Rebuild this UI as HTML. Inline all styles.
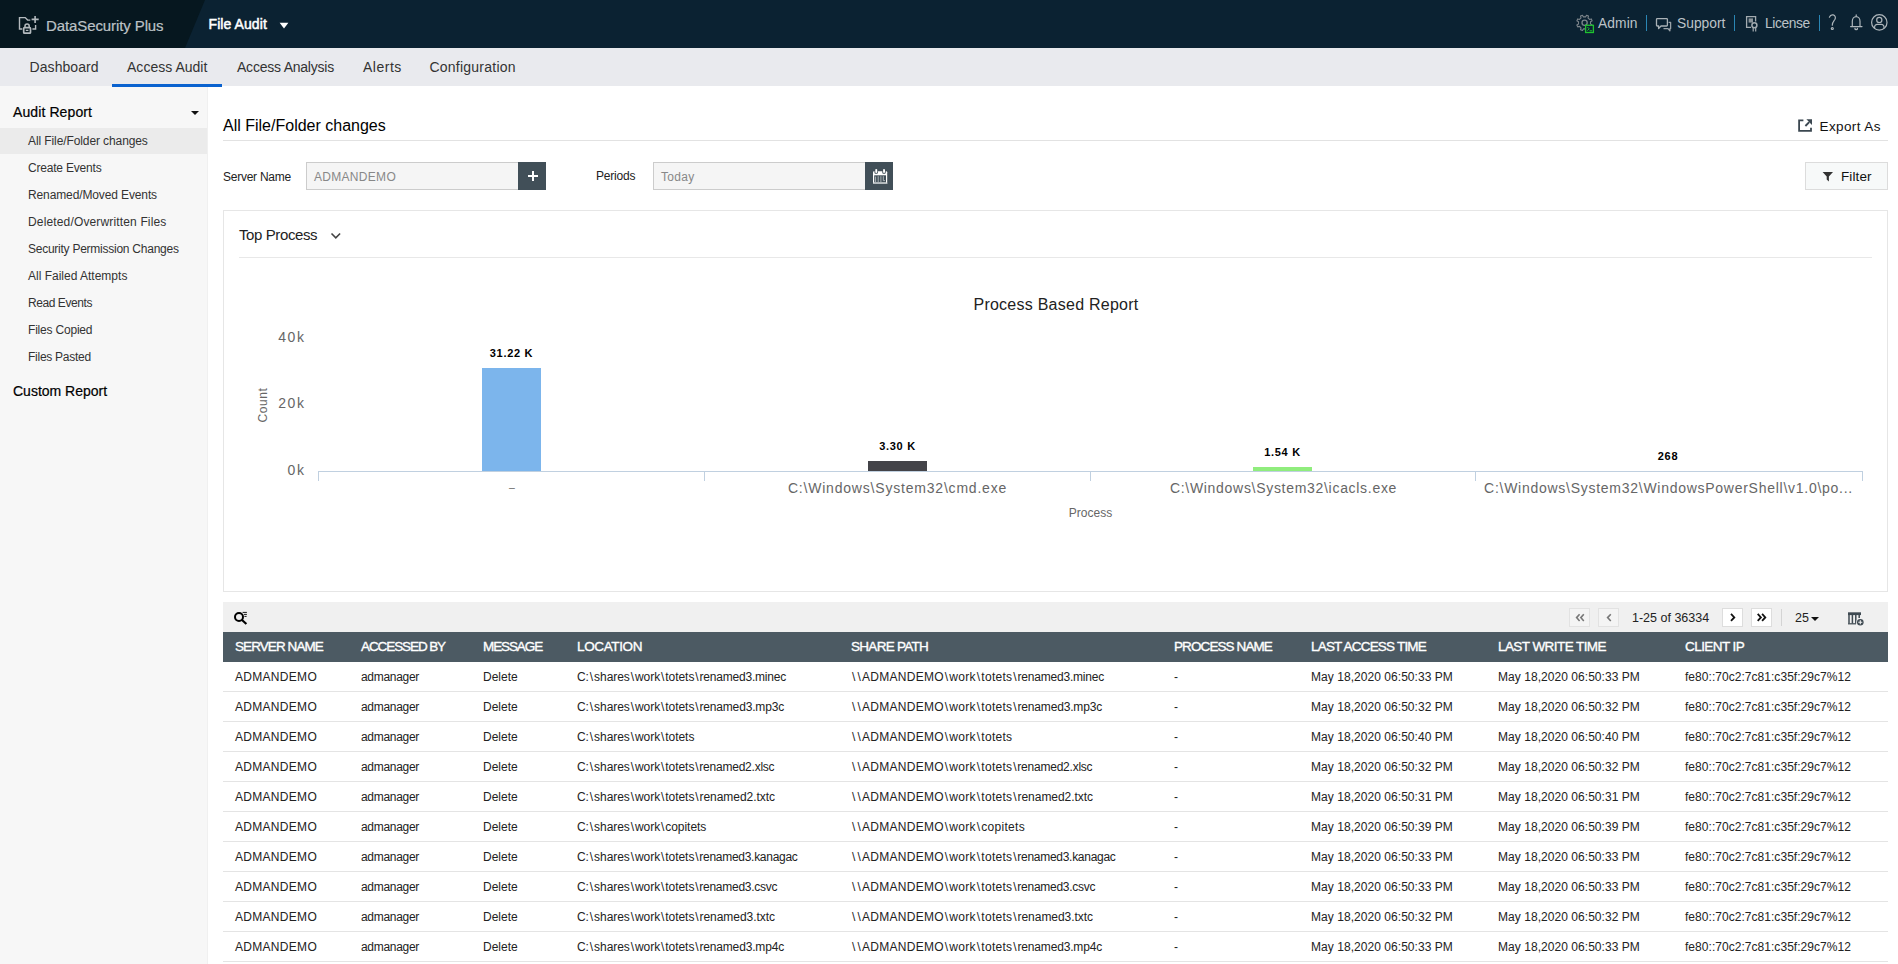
<!DOCTYPE html>
<html><head><meta charset="utf-8"><title>DataSecurity Plus</title>
<style>
*{box-sizing:border-box;margin:0;padding:0}
html,body{width:1898px;height:964px;overflow:hidden;background:#fff;font-family:"Liberation Sans",sans-serif;color:#222}
.abs{position:absolute}
.t{position:absolute;white-space:nowrap;line-height:1}
svg{position:absolute;overflow:visible}
#hdr{position:absolute;left:0;top:0;width:1898px;height:48px;background:#0b2232;overflow:hidden}
#hdr .dark{position:absolute;left:0;top:0;width:205px;height:48px;background:#06171f;clip-path:polygon(0 0,205px 0,185px 48px,0 48px)}
#hdr .lnk{font-size:13.8px;color:#bcc3c8;top:16.6px;letter-spacing:.08px}
#hdr .sep{position:absolute;top:15px;width:1px;height:16px;background:#2a86b4}
#nav{position:absolute;left:0;top:48px;width:1898px;height:40px}
#navbg{position:absolute;left:0;top:48px;width:1898px;height:38px;background:#e9eaee}
#nav .t{font-size:14px;color:#333;top:12px}
#side{position:absolute;left:0;top:86px;width:208px;height:878px;background:#f7f7f7;border-right:1px solid #f0f0f0}
#side .it{position:absolute;left:28px;font-size:12px;color:#333;white-space:nowrap;line-height:1}
#side .hd{position:absolute;left:13px;font-size:14px;color:#000;-webkit-text-stroke:.2px #000;white-space:nowrap;line-height:1}
.inp{position:absolute;top:162px;height:28px;background:#f5f5f5;border:1px solid #ccc;font-size:12px;color:#888;line-height:28px;padding-left:7px;letter-spacing:.3px}
.dbtn{position:absolute;top:162px;width:28px;height:28px;background:#414f58}
.lbl{font-size:12px;color:#222}
.ax{fill:#666;font-family:"Liberation Sans",sans-serif}
.dl{fill:#000;font-weight:bold;font-size:11px;letter-spacing:.7px;font-family:"Liberation Sans",sans-serif}
#tb{position:absolute;left:223px;top:602px;width:1665px;height:30px;background:#f0f0f0}
.pg{position:absolute;top:6px;width:21px;height:19px;border:1px solid #ddd;background:#fff}
.pg.dis{background:#f4f4f4;border-color:#e2e2e2}
#th{position:absolute;left:223px;top:632px;width:1665px;height:30px;background:#4c5a63}
#th .t{top:8px;font-size:13.5px;color:#fff;-webkit-text-stroke:.35px #fff}
.tr{position:absolute;left:223px;width:1665px;height:30px;border-bottom:1px solid #e4e4e4;font-size:12px;color:#222;line-height:31px}
.c{position:absolute;top:0;white-space:pre}
.c1{left:12px;letter-spacing:.3px}.c2{left:138px;letter-spacing:-.3px}.c3{left:260px}.c4{left:354px;letter-spacing:-.05px}.c5{left:628px;letter-spacing:.28px}
.c6{left:951px}.c7{left:1088px;letter-spacing:.05px}.c8{left:1275px;letter-spacing:.05px}.c9{left:1462px;letter-spacing:.04px}
.c i{font-style:normal;padding:0 .95px}
.c b{font-weight:normal}
</style></head><body>
<div id="hdr"><div class="dark"></div>
<svg width="1898" height="48" viewBox="0 0 1898 48" style="left:0;top:0">
<g fill="none" stroke="#b4babe" stroke-width="1.4">
<path d="M22.3,29 H19.5 V17.6 H25.2 L27.6,20.1 H30.3"/>
<path d="M35.6,25 V29 H32.4"/>
<path d="M31.6,19.4 H38.7 M35.1,15.9 V22.9" stroke-width="1.6"/>
<rect x="23.7" y="27.6" width="6.8" height="5.6" rx="0.8" stroke-width="1.7"/>
<path d="M25,27.4 V26 a2.1,2.1 0 0 1 4.2,0 V27.4" stroke-width="1.5"/>
<path d="M25.8,30.4 H28.4" stroke-width="1.2"/>
</g>
<g fill="none" stroke="#7d858b" stroke-width="1.1" stroke-linejoin="round">
<path d="M1590.50,24.00 L1592.14,24.92 L1591.33,26.87 L1589.52,26.37 L1587.97,27.92 L1588.47,29.73 L1586.52,30.54 L1585.60,28.90 L1583.40,28.90 L1582.48,30.54 L1580.53,29.73 L1581.03,27.92 L1579.48,26.37 L1577.67,26.87 L1576.86,24.92 L1578.50,24.00 L1578.50,21.80 L1576.86,20.88 L1577.67,18.93 L1579.48,19.43 L1581.03,17.88 L1580.53,16.07 L1582.48,15.26 L1583.40,16.90 L1585.60,16.90 L1586.52,15.26 L1588.47,16.07 L1587.97,17.88 L1589.52,19.43 L1591.33,18.93 L1592.14,20.88 L1590.50,21.80Z"/>
<circle cx="1584.6" cy="22.8" r="2.6" stroke-width="1.3"/>
</g>
<rect x="1585.6" y="25.3" width="7.8" height="7.2" fill="#0b2232" stroke="#1fc22f" stroke-width="1.3"/>
<path d="M1587.4,27 L1589.2,28.8 L1587.4,30.6 M1589.6,30.8 H1592.2" fill="none" stroke="#1fc22f" stroke-width="1"/>
<g fill="none" stroke="#9aa3a9" stroke-width="1.3" stroke-linejoin="round">
<path d="M1663.5,28.6 H1668 L1669.9,30.8 V28.6 H1670.6 V22.3 H1668.6"/>
<path d="M1657.3,18.7 H1666.6 a0.8,0.8 0 0 1 .8,.8 V25.2 a.8,.8 0 0 1 -.8,.8 H1661 L1658.6,28.6 V26 H1657.3 a.8,.8 0 0 1 -.8,-.8 V19.5 a.8,.8 0 0 1 .8,-.8Z" stroke="#aab2b7"/>
</g>
<g fill="none" stroke="#a3abb0" stroke-width="1.3">
<path d="M1751,27.4 H1746.6 V16.6 H1755.6 V21.6"/>
<rect x="1748.6" y="18.4" width="4.4" height="4.2" fill="#8a9399" stroke="none"/>
<circle cx="1754.4" cy="25.3" r="2.5" fill="#0b2232" stroke-width="1.5"/>
<path d="M1753.2,28 V31.6 M1755.7,28 V31.6" stroke-width="1.2"/>
</g>
<g fill="none" stroke="#aeb6bb" stroke-width="1.2" stroke-linecap="round">
<path d="M1829.4,17.2 C1830.2,15.2 1832,14.6 1833.2,14.9 C1835.2,15.4 1835.9,17.6 1835,19.3 C1834,21 1832.3,21.8 1832.3,25.2"/>
<circle cx="1832.3" cy="28.5" r="1"/>
<path d="M1850.6,26.6 H1862 M1852.3,26.6 V21.2 a3.85,4.6 0 0 1 7.7,0 V26.6 M1856.2,16.4 V14.9"/>
<path d="M1855,28.4 a1.2,1.2 0 0 0 2.4,0" stroke-width="1.4"/>
<circle cx="1879.3" cy="22.4" r="7.7"/>
<circle cx="1879.3" cy="19.9" r="2.6"/>
<path d="M1874.6,28 V27 a2.6,2.6 0 0 1 2.6,-2.6 H1881.4 a2.6,2.6 0 0 1 2.6,2.6 V28"/>
</g>
<path d="M279.6,22.8 h8.8 l-4.4,5.6z" fill="#fff"/>
</svg>
<div class="t" style="left:46px;top:18px;font-size:15px;color:#bcc2c6;-webkit-text-stroke:.2px #bcc2c6;letter-spacing:-.1px">DataSecurity Plus</div>
<div class="t" style="left:208.5px;top:17px;font-size:14px;color:#fff;-webkit-text-stroke:.5px #fff;letter-spacing:.08px">File Audit</div>
<div class="t lnk" style="left:1598px;letter-spacing:.1px">Admin</div><div class="sep" style="left:1646px"></div>
<div class="t lnk" style="left:1677px;letter-spacing:0">Support</div><div class="sep" style="left:1734px"></div>
<div class="t lnk" style="left:1765px;letter-spacing:-.4px">License</div><div class="sep" style="left:1819px"></div>
</div>
<div id="navbg"></div><div id="nav" style="z-index:3">
<div class="t" style="left:29.5px;letter-spacing:.08px">Dashboard</div>
<div class="t" style="left:127px;letter-spacing:.02px">Access Audit</div>
<div class="t" style="left:237px;letter-spacing:-.23px">Access Analysis</div>
<div class="t" style="left:363px;letter-spacing:.5px">Alerts</div>
<div class="t" style="left:429.5px;letter-spacing:.23px">Configuration</div>
<div class="abs" style="left:112px;top:36px;width:110px;height:3px;background:#0a62cf"></div>
</div>
<div id="side">
<div class="hd" style="top:19px;letter-spacing:.1px">Audit Report</div>
<div class="abs" style="left:191px;top:25px;width:0;height:0;border-left:4px solid transparent;border-right:4px solid transparent;border-top:4px solid #111"></div>
<div class="abs" style="left:0;top:42px;width:207px;height:26px;background:#ebebeb"></div>
<div class="it" style="top:49px;letter-spacing:-0.1px">All File/Folder changes</div>
<div class="it" style="top:76px;letter-spacing:-0.2px">Create Events</div>
<div class="it" style="top:103px;letter-spacing:-0.12px">Renamed/Moved Events</div>
<div class="it" style="top:130px;letter-spacing:0.15px">Deleted/Overwritten Files</div>
<div class="it" style="top:157px;letter-spacing:-0.25px">Security Permission Changes</div>
<div class="it" style="top:184px;letter-spacing:0px">All Failed Attempts</div>
<div class="it" style="top:211px;letter-spacing:-0.43px">Read Events</div>
<div class="it" style="top:238px;letter-spacing:-0.2px">Files Copied</div>
<div class="it" style="top:265px;letter-spacing:-0.26px">Files Pasted</div>
<div class="hd" style="top:298px">Custom Report</div>
</div>
<div class="t" style="left:223px;top:118px;font-size:16px;color:#000">All File/Folder changes</div>
<div class="abs" style="left:223px;top:140px;width:1665px;height:1px;background:#e2e2e2"></div>
<svg width="16" height="16" viewBox="0 0 16 16" style="left:1797px;top:118px"><g fill="none" stroke="#3b4750" stroke-width="1.8"><path d="M6.4,2.3 H2.1 V12.9 H14 V9.8"/><path d="M8.4,8 L12.2,4.2" stroke-width="1.9"/></g><path d="M9.4,1.3 H15 V6.9Z" fill="#3b4750"/></svg>
<div class="t" style="left:1819.5px;top:120px;font-size:13.5px;color:#111;letter-spacing:.4px">Export As</div>
<div class="t lbl" style="left:223px;top:171px;letter-spacing:-.25px">Server Name</div>
<div class="inp" style="left:306px;width:212px;border-right:none">ADMANDEMO</div>
<div class="dbtn" style="left:518px"><div class="abs" style="left:10px;top:13px;width:10px;height:2px;background:#fff"></div><div class="abs" style="left:14px;top:9px;width:2px;height:10px;background:#fff"></div></div>
<div class="t lbl" style="left:596px;top:170px;letter-spacing:-.2px">Periods</div>
<div class="inp" style="left:653px;width:212px;border-right:none">Today</div>
<div class="dbtn" style="left:865px"><svg width="28" height="28" viewBox="0 0 28 28" style="left:0;top:0"><path d="M8,10.2 Q8,9.3 9,9.3 H21.2 Q22.2,9.3 22.2,10.2 V22 H8Z" fill="#fff"/><rect x="8" y="20.6" width="14.2" height="1.4" fill="#b4bbbf"/><rect x="9.5" y="8.6" width="3.4" height="3.2" rx="1" fill="#414f58"/><rect x="17.3" y="8.6" width="3.4" height="3.2" rx="1" fill="#414f58"/><rect x="10.3" y="6.9" width="1.9" height="4" rx=".9" fill="#fff"/><rect x="18.1" y="6.9" width="1.9" height="4" rx=".9" fill="#fff"/><rect x="9.2" y="13.3" width="11.8" height="7" fill="#414f58"/><path d="M10.6,14.6 V20.3 M13.2,14.2 V20.3 M15.9,14.2 V20.3 M18.3,14.2 V18.6 H20" stroke="#aab2b7" stroke-width="1" fill="none"/></svg></div>
<div class="abs" style="left:1805px;top:162px;width:83px;height:28px;background:#f7f9f9;border:1px solid #dcdcdc"></div>
<svg width="12" height="10" viewBox="0 0 12 10" style="left:1822px;top:172px"><path d="M0.6,0 H11 L6.9,4.6 V9.4 L4.7,7.6 V4.6Z" fill="#333"/></svg>
<div class="t" style="left:1841px;top:170px;font-size:13.5px;color:#111;letter-spacing:.1px">Filter</div>
<div class="abs" style="left:223px;top:210px;width:1665px;height:382px;border:1px solid #e6e6e6"></div>
<div class="t" style="left:239px;top:227px;font-size:15px;color:#222;letter-spacing:-.4px">Top Process</div>
<svg width="12" height="8" viewBox="0 0 12 8" style="left:330px;top:232px"><path d="M1.5,1.5 L5.8,5.8 L10.1,1.5" fill="none" stroke="#444" stroke-width="1.6"/></svg>
<div class="abs" style="left:239px;top:257px;width:1633px;height:1px;background:#e8e8e8"></div>

<svg width="1898" height="964" viewBox="0 0 1898 964" style="left:0;top:0;pointer-events:none">
<text x="1056" y="310" text-anchor="middle" font-size="16" letter-spacing=".25" fill="#222" font-family="Liberation Sans">Process Based Report</text>
<g class="ax" font-size="14" text-anchor="end" letter-spacing="1.6">
<text x="305.6" y="342">40k</text><text x="305.6" y="408">20k</text><text x="305.6" y="475">0k</text></g>
<text class="ax" font-size="12" letter-spacing=".6" text-anchor="middle" transform="translate(266.5,405) rotate(-90)">Count</text>
<rect x="482" y="368" width="59" height="103" fill="#7cb5ec"/>
<rect x="868" y="461" width="59" height="10" fill="#434348"/>
<rect x="1253" y="467" width="59" height="4" fill="#90ed7d"/>
<path d="M318,471.5 H1862.5 M318.5,471 V481 M704.5,471 V481 M1090.5,471 V481 M1475.5,471 V481 M1862.5,471 V481" stroke="#c0d0e0" stroke-width="1" fill="none"/>
<g class="dl" text-anchor="middle"><text x="511.5" y="356.5">31.22 K</text><text x="897.5" y="449.5">3.30 K</text><text x="1282.5" y="455.5">1.54 K</text><text x="1668" y="459.5">268</text></g>
<g class="ax" font-size="14" text-anchor="middle">
<text x="511.8" y="490.6" font-size="10.5">–</text>
<text x="897.5" y="493" letter-spacing=".8">C:\Windows\System32\cmd.exe</text>
<text x="1283.5" y="493" letter-spacing=".7">C:\Windows\System32\icacls.exe</text>
<text x="1668.5" y="493" letter-spacing=".73">C:\Windows\System32\WindowsPowerShell\v1.0\po...</text></g>
<text class="ax" x="1090.5" y="516.5" font-size="12" text-anchor="middle">Process</text>
</svg>

<div id="tb">
<svg width="16" height="16" viewBox="0 0 16 16" style="left:10px;top:8px"><g fill="none" stroke="#000"><circle cx="6" cy="7" r="4" stroke-width="2"/><path d="M9,10 L13.4,14" stroke-width="2.2"/><path d="M9.6,2.4 H13.9 M10.9,4.4 H13.9 M11.4,6.4 H13.6" stroke-width=".9"/></g></svg>
<div class="pg dis" style="left:1346px"><svg width="20" height="18" viewBox="0 0 20 18" style="left:-.5px;top:-.4px"><path d="M9.6,5.2 L6.6,8.6 L9.6,12 M13.8,5.2 L10.8,8.6 L13.8,12" fill="none" stroke="#787878" stroke-width="1.6"/></svg></div>
<div class="pg dis" style="left:1375px"><svg width="20" height="18" viewBox="0 0 20 18" style="left:-.5px;top:-.4px"><path d="M11.8,5.2 L8.6,8.6 L11.8,12" fill="none" stroke="#787878" stroke-width="1.6"/></svg></div>
<div class="t" style="left:1409px;top:10px;font-size:12.5px;color:#222">1-25 of 36334</div>
<div class="pg" style="left:1499px"><svg width="20" height="18" viewBox="0 0 20 18" style="left:-.5px;top:-.4px"><path d="M8,4.9 L11.3,8.4 L8,11.9" fill="none" stroke="#111" stroke-width="1.8"/></svg></div>
<div class="pg" style="left:1528px"><svg width="20" height="18" viewBox="0 0 20 18" style="left:-.5px;top:-.4px"><path d="M5.7,4.9 L8.9,8.4 L5.7,11.9 M10.1,4.9 L13.3,8.4 L10.1,11.9" fill="none" stroke="#111" stroke-width="1.8"/></svg></div>
<div class="abs" style="left:1558px;top:7px;width:1px;height:17px;background:#d4d4d4"></div>
<div class="t" style="left:1572px;top:10px;font-size:12.5px;color:#222">25</div>
<div class="abs" style="left:1588px;top:15px;width:0;height:0;border-left:4px solid transparent;border-right:4px solid transparent;border-top:4px solid #111"></div>
<svg width="18" height="16" viewBox="0 0 18 16" style="left:1624px;top:9px"><g fill="none" stroke="#3f4a52"><path d="M1,2.7 H14" stroke-width="2.8"/><path d="M2,3 V12.5 M5.4,3 V12.5 M8.8,3 V12.5 M12.2,3 V7" stroke-width="1.5"/><path d="M1,12.8 H9" stroke-width="1.2"/><circle cx="13.3" cy="11.2" r="3.9" fill="#f0f0f0" stroke="none"/><circle cx="13.3" cy="11.2" r="3.3" fill="#3f4a52" stroke="none"/><path d="M11.3,11.2 H15.3 M13.3,9.2 V13.2" stroke="#f0f0f0" stroke-width="1.1"/></g></svg>
</div>
<div id="th">
<div class="t" style="left:12px;letter-spacing:-.92px">SERVER NAME</div>
<div class="t" style="left:138px;letter-spacing:-1.09px">ACCESSED BY</div>
<div class="t" style="left:260px;letter-spacing:-1.1px">MESSAGE</div>
<div class="t" style="left:354px;letter-spacing:-.36px">LOCATION</div>
<div class="t" style="left:628px;letter-spacing:-.71px">SHARE PATH</div>
<div class="t" style="left:951px;letter-spacing:-.9px">PROCESS NAME</div>
<div class="t" style="left:1088px;letter-spacing:-.8px">LAST ACCESS TIME</div>
<div class="t" style="left:1275px;letter-spacing:-.57px">LAST WRITE TIME</div>
<div class="t" style="left:1462px;letter-spacing:-.56px">CLIENT IP</div>
</div>

<div class="tr" style="top:662px"><span class="c c1">ADMANDEMO</span><span class="c c2">admanager</span><span class="c c3">Delete</span><span class="c c4">C:<i>\</i>shares<i>\</i>work<i>\</i>totets<b style="letter-spacing:-0.19px"><i>\</i>renamed3.minec</b></span><span class="c c5"><i>\</i><i>\</i>ADMANDEMO<i>\</i>work<i>\</i>totets<b style="letter-spacing:-0.19px"><i>\</i>renamed3.minec</b></span><span class="c c6">-</span><span class="c c7">May 18,2020 06:50:33 PM</span><span class="c c8">May 18,2020 06:50:33 PM</span><span class="c c9">fe80::70c2:7c81:c35f:29c7%12</span></div>
<div class="tr" style="top:692px"><span class="c c1">ADMANDEMO</span><span class="c c2">admanager</span><span class="c c3">Delete</span><span class="c c4">C:<i>\</i>shares<i>\</i>work<i>\</i>totets<b style="letter-spacing:-0.16px"><i>\</i>renamed3.mp3c</b></span><span class="c c5"><i>\</i><i>\</i>ADMANDEMO<i>\</i>work<i>\</i>totets<b style="letter-spacing:-0.16px"><i>\</i>renamed3.mp3c</b></span><span class="c c6">-</span><span class="c c7">May 18,2020 06:50:32 PM</span><span class="c c8">May 18,2020 06:50:32 PM</span><span class="c c9">fe80::70c2:7c81:c35f:29c7%12</span></div>
<div class="tr" style="top:722px"><span class="c c1">ADMANDEMO</span><span class="c c2">admanager</span><span class="c c3">Delete</span><span class="c c4">C:<i>\</i>shares<i>\</i>work<i>\</i>totets</span><span class="c c5"><i>\</i><i>\</i>ADMANDEMO<i>\</i>work<i>\</i>totets</span><span class="c c6">-</span><span class="c c7">May 18,2020 06:50:40 PM</span><span class="c c8">May 18,2020 06:50:40 PM</span><span class="c c9">fe80::70c2:7c81:c35f:29c7%12</span></div>
<div class="tr" style="top:752px"><span class="c c1">ADMANDEMO</span><span class="c c2">admanager</span><span class="c c3">Delete</span><span class="c c4">C:<i>\</i>shares<i>\</i>work<i>\</i>totets<b style="letter-spacing:-0.23px"><i>\</i>renamed2.xlsc</b></span><span class="c c5"><i>\</i><i>\</i>ADMANDEMO<i>\</i>work<i>\</i>totets<b style="letter-spacing:-0.23px"><i>\</i>renamed2.xlsc</b></span><span class="c c6">-</span><span class="c c7">May 18,2020 06:50:32 PM</span><span class="c c8">May 18,2020 06:50:32 PM</span><span class="c c9">fe80::70c2:7c81:c35f:29c7%12</span></div>
<div class="tr" style="top:782px"><span class="c c1">ADMANDEMO</span><span class="c c2">admanager</span><span class="c c3">Delete</span><span class="c c4">C:<i>\</i>shares<i>\</i>work<i>\</i>totets<b style="letter-spacing:-0.04px"><i>\</i>renamed2.txtc</b></span><span class="c c5"><i>\</i><i>\</i>ADMANDEMO<i>\</i>work<i>\</i>totets<b style="letter-spacing:-0.04px"><i>\</i>renamed2.txtc</b></span><span class="c c6">-</span><span class="c c7">May 18,2020 06:50:31 PM</span><span class="c c8">May 18,2020 06:50:31 PM</span><span class="c c9">fe80::70c2:7c81:c35f:29c7%12</span></div>
<div class="tr" style="top:812px"><span class="c c1">ADMANDEMO</span><span class="c c2">admanager</span><span class="c c3">Delete</span><span class="c c4">C:<i>\</i>shares<i>\</i>work<i>\</i>copitets</span><span class="c c5"><i>\</i><i>\</i>ADMANDEMO<i>\</i>work<i>\</i>copitets</span><span class="c c6">-</span><span class="c c7">May 18,2020 06:50:39 PM</span><span class="c c8">May 18,2020 06:50:39 PM</span><span class="c c9">fe80::70c2:7c81:c35f:29c7%12</span></div>
<div class="tr" style="top:842px"><span class="c c1">ADMANDEMO</span><span class="c c2">admanager</span><span class="c c3">Delete</span><span class="c c4">C:<i>\</i>shares<i>\</i>work<i>\</i>totets<b style="letter-spacing:-0.28px"><i>\</i>renamed3.kanagac</b></span><span class="c c5"><i>\</i><i>\</i>ADMANDEMO<i>\</i>work<i>\</i>totets<b style="letter-spacing:-0.28px"><i>\</i>renamed3.kanagac</b></span><span class="c c6">-</span><span class="c c7">May 18,2020 06:50:33 PM</span><span class="c c8">May 18,2020 06:50:33 PM</span><span class="c c9">fe80::70c2:7c81:c35f:29c7%12</span></div>
<div class="tr" style="top:872px"><span class="c c1">ADMANDEMO</span><span class="c c2">admanager</span><span class="c c3">Delete</span><span class="c c4">C:<i>\</i>shares<i>\</i>work<i>\</i>totets<b style="letter-spacing:-0.26px"><i>\</i>renamed3.csvc</b></span><span class="c c5"><i>\</i><i>\</i>ADMANDEMO<i>\</i>work<i>\</i>totets<b style="letter-spacing:-0.26px"><i>\</i>renamed3.csvc</b></span><span class="c c6">-</span><span class="c c7">May 18,2020 06:50:33 PM</span><span class="c c8">May 18,2020 06:50:33 PM</span><span class="c c9">fe80::70c2:7c81:c35f:29c7%12</span></div>
<div class="tr" style="top:902px"><span class="c c1">ADMANDEMO</span><span class="c c2">admanager</span><span class="c c3">Delete</span><span class="c c4">C:<i>\</i>shares<i>\</i>work<i>\</i>totets<b style="letter-spacing:-0.04px"><i>\</i>renamed3.txtc</b></span><span class="c c5"><i>\</i><i>\</i>ADMANDEMO<i>\</i>work<i>\</i>totets<b style="letter-spacing:-0.04px"><i>\</i>renamed3.txtc</b></span><span class="c c6">-</span><span class="c c7">May 18,2020 06:50:32 PM</span><span class="c c8">May 18,2020 06:50:32 PM</span><span class="c c9">fe80::70c2:7c81:c35f:29c7%12</span></div>
<div class="tr" style="top:932px"><span class="c c1">ADMANDEMO</span><span class="c c2">admanager</span><span class="c c3">Delete</span><span class="c c4">C:<i>\</i>shares<i>\</i>work<i>\</i>totets<b style="letter-spacing:-0.16px"><i>\</i>renamed3.mp4c</b></span><span class="c c5"><i>\</i><i>\</i>ADMANDEMO<i>\</i>work<i>\</i>totets<b style="letter-spacing:-0.16px"><i>\</i>renamed3.mp4c</b></span><span class="c c6">-</span><span class="c c7">May 18,2020 06:50:33 PM</span><span class="c c8">May 18,2020 06:50:33 PM</span><span class="c c9">fe80::70c2:7c81:c35f:29c7%12</span></div>
</body></html>
